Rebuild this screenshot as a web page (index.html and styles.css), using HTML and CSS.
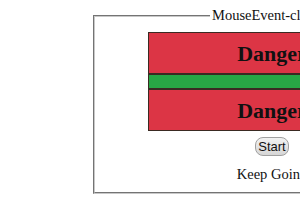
FILE: index.html
```html
<!DOCTYPE html>
<html lang="en">
<head>
    <meta charset="UTF-8">
    <meta name="viewport" content="width=device-width, initial-scale=1.0">
    <title>MouseEvent-click</title>
    <link rel="stylesheet" href="styles.css">
</head>
<body>
    <div id="page">
        <fieldset id="demo">
            <legend>MouseEvent-click</legend>
            <div class="box danger">Danger</div>
            <div class="box success"></div>
            <div class="box danger">Danger</div>
            <button id="start-btn" class="btn">Start</button>
            <p id="status">Keep Going</p>
        </fieldset>
    </div>
</body>
</html>
```

FILE: styles.css
```css
html, body {
    margin: 0;
    overflow: hidden;
}
body {
    font-family: 'Liberation Serif', 'Times New Roman', serif;
    background: #fff;
    color: #111;
}
#page {
    width: 600px;
    padding: 7px 0 0 93px;
}
#demo {
    width: 248px;
    margin: 0;
    padding: 8px 53px 9px;
    border: 2px groove #c8c8c8;
    text-align: center;
}
#demo legend {
    text-align: left;
    font-size: 14.5px;
    margin-left: 62px;
    padding: 0 2px;
}
.box {
    box-sizing: border-box;
    width: 248px;
    border: 1px solid #3a2a22;
    font-size: 22px;
    font-weight: bold;
    padding: 8px 0 6px;
}
.danger { background-color: #dc3545; }
.success {
    background-color: #28a745;
    height: 15px;
    padding: 0;
}
.btn {
    display: block;
    margin: 6px auto 0;
    font-family: 'Liberation Sans', Arial, sans-serif;
    font-size: 13px;
    line-height: 15px;
    padding: 1px 2px;
    color: #111;
    border: 1px solid #a0a0a0;
    border-radius: 8px;
    background: linear-gradient(#f2f2f2, #d6d6d6);
}
#status {
    font-size: 14.5px;
    margin: 10px 0 0;
}
```
